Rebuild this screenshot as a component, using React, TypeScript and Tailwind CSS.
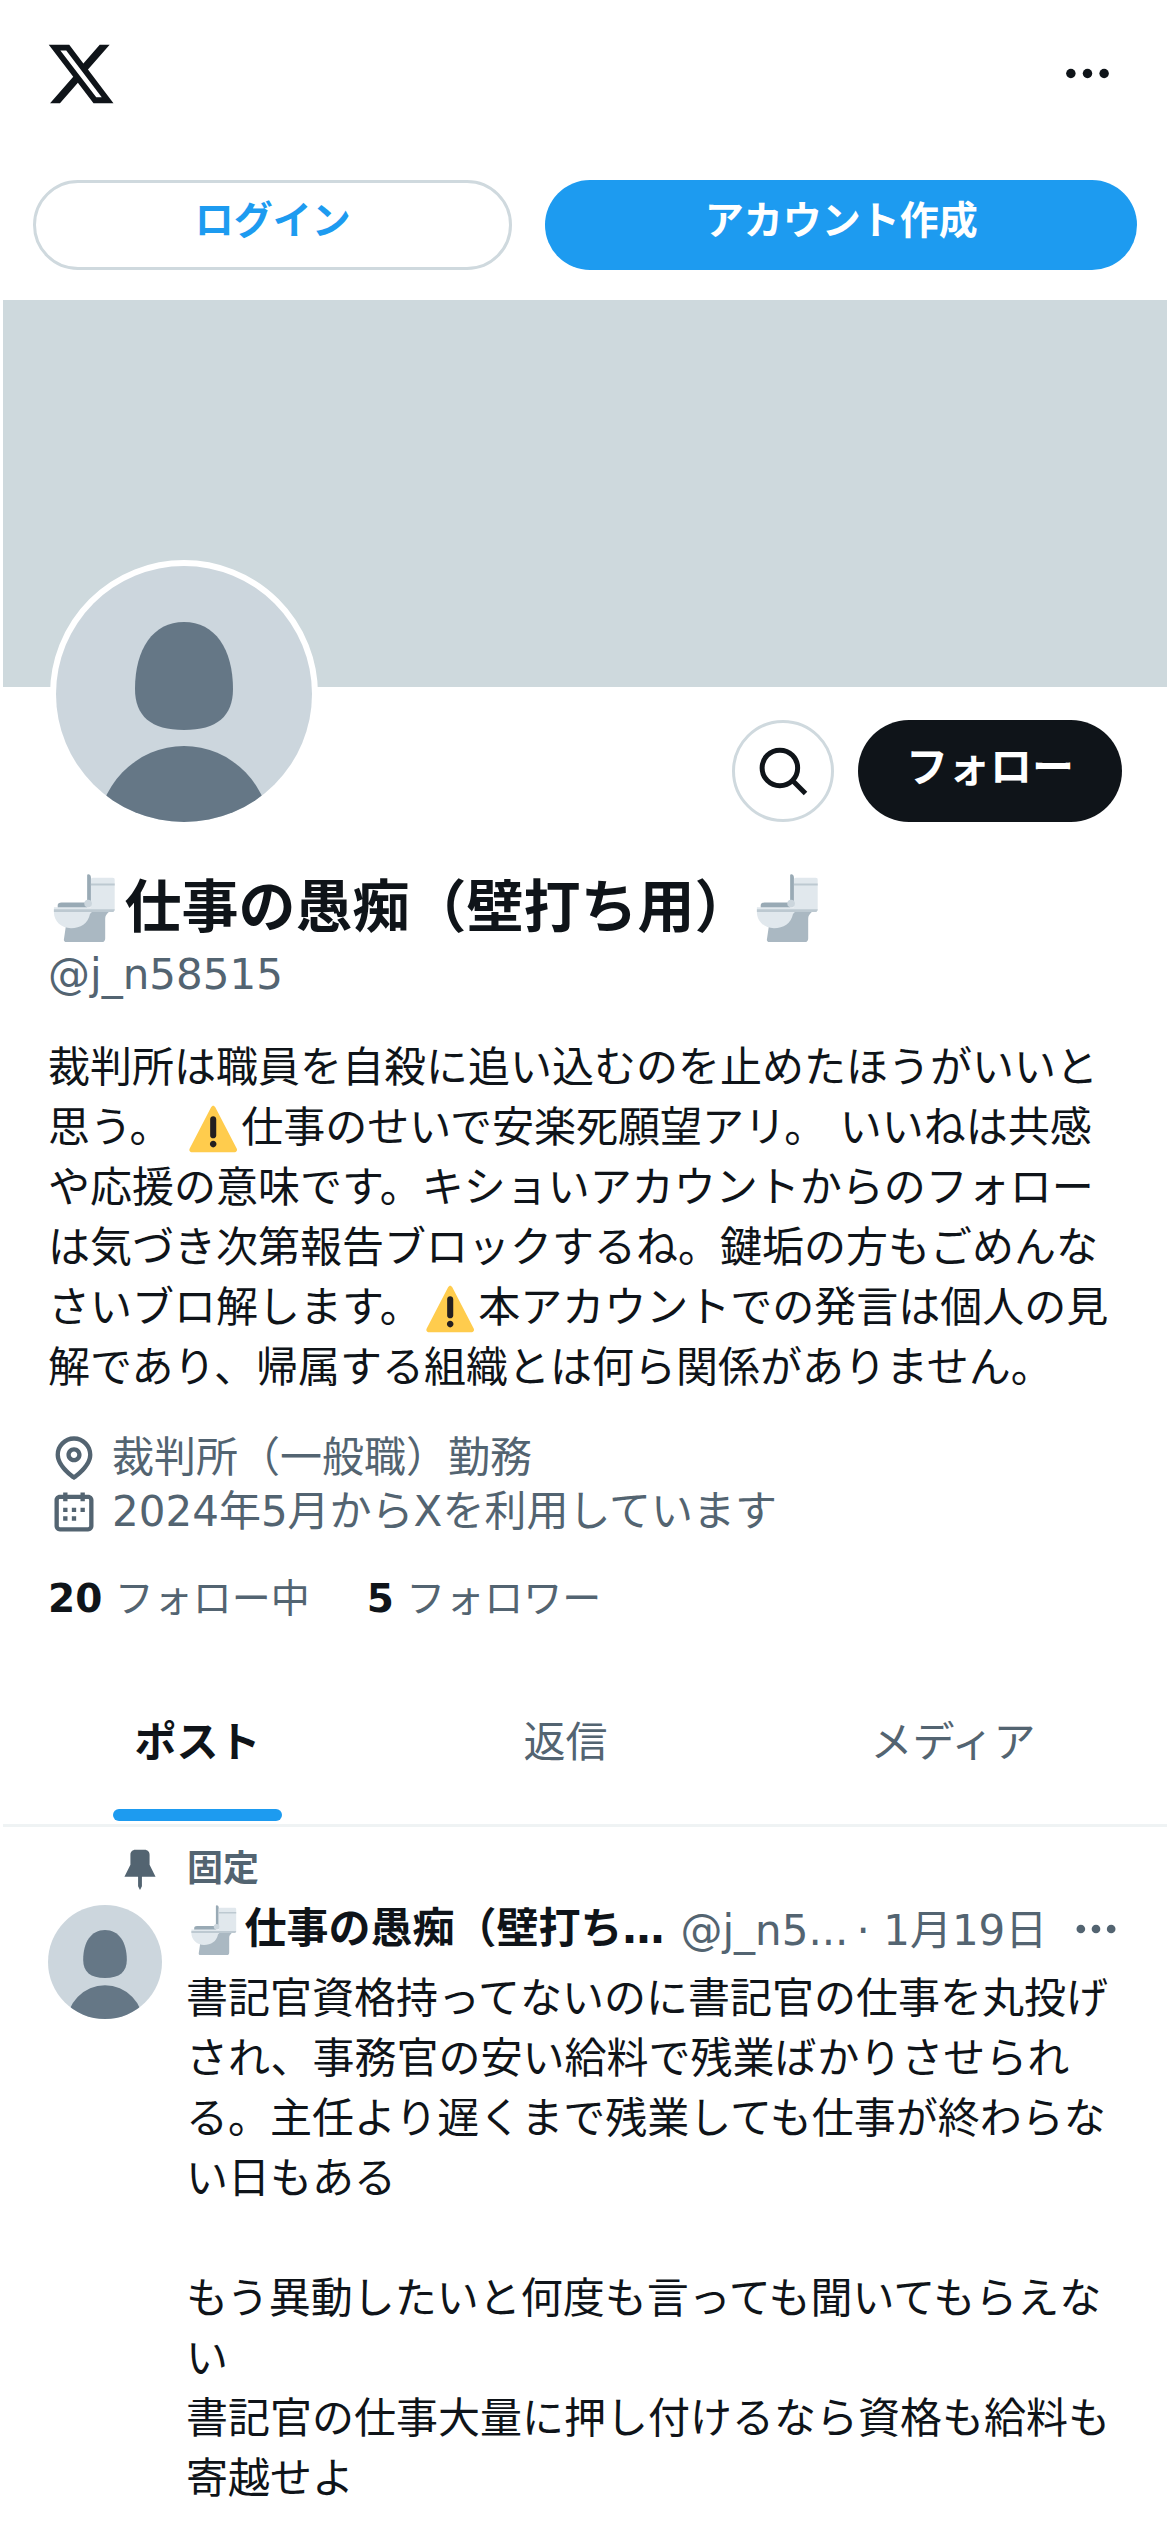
import React from "react";

const FONT = "font-['DejaVu_Sans','Noto_Sans_CJK_JP',sans-serif]";

function XLogo() {
  return (
    <svg viewBox="0 0 24 24" className="size-[72px] fill-[#0f1419]" aria-hidden="true">
      <path fillRule="evenodd" d="M18.244 2.250h3.308l-7.227 8.260 8.502 11.240H16.170l-5.214-6.817L4.990 21.750H1.680l7.730-8.835L1.254 2.250H8.080l4.713 6.231zm-1.161 17.520h1.833L7.084 4.126H5.117z" />
    </svg>
  );
}

function Dots({ className }: { className: string }) {
  return (
    <svg viewBox="0 0 24 24" className={className} fill="currentColor" aria-hidden="true">
      <circle cx="5" cy="12" r="2" />
      <circle cx="12" cy="12" r="2" />
      <circle cx="19" cy="12" r="2" />
    </svg>
  );
}

function Avatar() {
  return (
    <svg viewBox="0 0 256 256" className="block size-full rounded-full bg-[#ccd6dd]" role="img" aria-label="プロフィール画像">
      <path fill="#657786" d="M128 56c31 0 49 27 49 67 0 27-16 41-49 41s-49-14-49-41c0-40 18-67 49-67z" />
      <ellipse cx="128" cy="270" rx="87" ry="90" fill="#657786" />
    </svg>
  );
}

function Toilet() {
  return (
    <svg viewBox="0 0 36 36" className="mx-1 inline-block size-[1.2em] align-[-20%]" role="img" aria-label="🚽">
      <path fill="#aab8c2" d="M7.500 26L6.300 34.200C6 35.300 6.800 36 8 36h18c1.300 0 2-.800 2-2V23.500c0-3 3-3.500 3-5.500H18z" />
      <path fill="#99aab5" d="M18.500.800c0-1.200 2-.800 2 1V17h-2zM3 16.500c0-1 .800-1.500 2-1.500h13.500v3H3z" />
      <path fill="#e1e8ed" d="M20.500 3c0-.600.400-1 1-1H32c.600 0 1 .400 1 1v15.500c0 .900-.600 1.500-1.500 1.500h-11z" />
      <path fill="#e1e8ed" d="M1 17.500h20V20l-1 1c-1 5-5 7.500-10 7.500S1 25 1 20z" />
      <path fill="#bdc9d1" d="M1 18.500h32c0 1-.600 1.500-1.500 1.500H1zM20.500 5H33v1H20.500z" />
      <circle cx="19" cy="15.500" r="2" fill="#ccd6dd" />
    </svg>
  );
}

function Warning() {
  return (
    <svg viewBox="-0.5 -0.5 37 37" className="mx-[3px] inline-block size-[1.2em] align-[-20%]" role="img" aria-label="⚠️">
      <path fill="#ffcc4d" d="M2.653 35C.811 35-.001 33.662.847 32.027L16.456 1.972c.849-1.635 2.238-1.635 3.087 0l15.609 30.056c.85 1.634.037 2.972-1.805 2.972H2.653z" />
      <path fill="#231f20" d="M15.583 28.953c0-1.333 1.085-2.418 2.419-2.418 1.333 0 2.418 1.085 2.418 2.418 0 1.334-1.086 2.419-2.418 2.419-1.334 0-2.419-1.085-2.419-2.419zm.186-18.293c0-1.302.961-2.108 2.232-2.108 1.241 0 2.233.837 2.233 2.108v11.938c0 1.271-.992 2.108-2.233 2.108-1.271 0-2.232-.807-2.232-2.108V10.660z" />
    </svg>
  );
}

function SearchIcon() {
  return (
    <svg viewBox="0 0 24 24" className="size-[60px]" fill="none" stroke="currentColor" strokeWidth="2" aria-hidden="true">
      <circle cx="10.750" cy="10.750" r="7.100" />
      <path d="M15.700 15.700l5.300 5.300" />
    </svg>
  );
}

function LocationIcon() {
  return (
    <svg viewBox="0 0 24 24" className="size-[52px] shrink-0" fill="currentColor" aria-hidden="true">
      <path d="M12 7c-1.930 0-3.500 1.570-3.500 3.500S10.070 14 12 14s3.500-1.570 3.500-3.500S13.930 7 12 7zm0 5c-.827 0-1.500-.673-1.500-1.500S11.173 9 12 9s1.500.673 1.500 1.500S12.827 12 12 12zm0-10c-4.687 0-8.500 3.813-8.500 8.500 0 5.967 7.621 11.116 7.945 11.332l.555.370.555-.370c.324-.216 7.945-5.365 7.945-11.332C20.500 5.813 16.687 2 12 2zm0 17.770c-1.665-1.241-6.500-5.196-6.500-9.270C5.500 6.916 8.416 4 12 4s6.500 2.916 6.500 6.500c0 4.073-4.835 8.028-6.500 9.270z" />
    </svg>
  );
}

function CalendarIcon() {
  return (
    <svg viewBox="0 0 24 24" className="size-[52px] shrink-0" fill="currentColor" aria-hidden="true">
      <path d="M7 4V3h2v1h6V3h2v1h1.500C19.890 4 21 5.120 21 6.500v12c0 1.380-1.110 2.500-2.500 2.500h-13C4.120 21 3 19.880 3 18.500v-12C3 5.120 4.120 4 5.500 4H7zm0 2H5.500c-.270 0-.500.220-.500.500v12c0 .280.230.500.500.500h13c.280 0 .500-.220.500-.500v-12c0-.280-.220-.500-.500-.500H17v1h-2V6H9v1H7V6zm0 6h2v-2H7v2zm0 4h2v-2H7v2zm4-4h2v-2h-2v2zm0 4h2v-2h-2v2zm4-4h2v-2h-2v2z" />
    </svg>
  );
}

function PinIcon() {
  return (
    <svg viewBox="0 0 24 24" className="size-[46px]" fill="currentColor" aria-hidden="true">
      <path d="M7 4.500C7 3.120 8.120 2 9.500 2h5C15.880 2 17 3.120 17 4.500v5.260L20.120 16H13v5l-1 2-1-2v-5H3.880L7 9.760V4.500z" />
    </svg>
  );
}

const tabs = ["ポスト", "返信", "メディア"];

export default function App() {
  return (
    <div lang="ja" className={`${FONT} min-h-screen bg-white px-[3px] text-[42px] leading-[60px] text-[#0f1419]`}>
      <header>
        <div className="flex h-[147px] items-center justify-between pl-[42px] pr-[51px]">
          <a href="#home" aria-label="X"><XLogo /></a>
          <button type="button" aria-label="もっと見る" className="text-[#0f1419]">
            <Dots className="size-[57px]" />
          </button>
        </div>
        <div className="flex gap-[33px] px-[30px] pb-[30px] pt-[33px] font-bold">
          <button type="button" className="h-[90px] grow-[4] basis-0 rounded-full border-3 border-[#cfd9de] pb-2 text-[39px] text-[#1d9bf0]">ログイン</button>
          <button type="button" className="h-[90px] grow-[5] basis-0 rounded-full bg-[#1d9bf0] pb-2 text-[39px] text-white">アカウント作成</button>
        </div>
      </header>

      <main>
        <div className="h-[387px] bg-[#ced9dd]" />
        <section className="px-[45px]">
          <div className="flex items-start justify-between">
            <div className="-mt-[127px] ml-0.5 size-[268px] rounded-full border-6 border-white bg-white"><Avatar /></div>
            <div className="flex gap-6 pt-[33px]">
              <button type="button" aria-label="検索" className="grid size-[102px] place-items-center rounded-full border-3 border-[#cfd9de]"><SearchIcon /></button>
              <button type="button" className="h-[102px] rounded-full bg-[#0f1419] px-12 pb-1.5 font-bold text-white">フォロー</button>
            </div>
          </div>

          <h1 className="mt-[42px] text-[57px] font-bold leading-[75px]"><Toilet />仕事の愚痴（壁打ち用）<Toilet /></h1>
          <p className="text-[#536471]">@j_n58515</p>
          <p className="mt-[33px]">
            裁判所は職員を自殺に追い込むのを止めたほうがいいと思う。 <Warning />仕事のせいで安楽死願望アリ。 いいねは共感や応援の意味です。キショいアカウントからのフォローは気づき次第報告ブロックするね。鍵垢の方もごめんなさいブロ解します。<Warning />本アカウントでの発言は個人の見解であり、帰属する組織とは何ら関係がありません。
          </p>

          <div className="mt-[33px] leading-[54px] text-[#536471]">
            <div className="flex items-center gap-3"><LocationIcon />裁判所（一般職）勤務</div>
            <div className="flex items-center gap-3"><CalendarIcon />2024年5月からXを利用しています</div>
          </div>

          <div className="mt-[30px] flex gap-[57px] text-[39px] text-[#536471]">
            <a href="#following"><b className="text-[#0f1419]">20</b> フォロー中</a>
            <a href="#followers"><b className="text-[#0f1419]">5</b> フォロワー</a>
          </div>
        </section>

        <nav className="mt-9 flex border-b-3 border-[#eff3f4]">
          {tabs.map((tab, i) => (
            <a
              key={tab}
              href={`#tab-${i}`}
              className={i === 0 ? "flex grow justify-center font-bold" : "flex grow justify-center text-[#536471]"}
            >
              <span className="flex h-[159px] flex-col">
                <span className="grow pt-[48px]">{tab}</span>
                {i === 0 && <span className="-mx-[21px] mb-[3px] h-3 rounded-full bg-[#1d9bf0]" />}
              </span>
            </a>
          ))}
        </nav>

        <article className="px-[45px] pt-[18px]">
          <div className="flex items-center gap-6 pl-[69px] text-[36px] font-bold leading-[48px] text-[#536471]">
            <PinIcon />固定
          </div>
          <div className="flex gap-6">
            <div className="mt-3 size-[114px] shrink-0"><Avatar /></div>
            <div className="min-w-0 grow">
              <div className="mb-2 mt-1 flex items-center whitespace-nowrap">
                <span className="font-bold"><Toilet />仕事の愚痴（壁打ち…</span>
                <span className="ml-4 pt-1 text-[#536471]">@j_n5...</span>
                <span className="ml-2 pt-1 text-[#536471]">· 1月19日</span>
                <button type="button" aria-label="もっと見る" className="ml-auto text-[#536471]"><Dots className="size-[52px]" /></button>
              </div>
              <p className="whitespace-pre-line">{`書記官資格持ってないのに書記官の仕事を丸投げされ、事務官の安い給料で残業ばかりさせられる。主任より遅くまで残業しても仕事が終わらない日もある

もう異動したいと何度も言っても聞いてもらえない
書記官の仕事大量に押し付けるなら資格も給料も寄越せよ`}</p>
            </div>
          </div>
        </article>
      </main>
    </div>
  );
}
